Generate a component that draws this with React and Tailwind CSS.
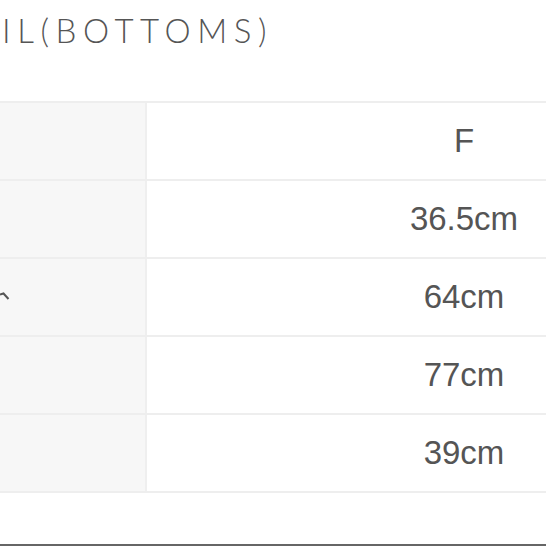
const rows = [
  { label: '', value: 'F' },
  { label: '', value: '36.5cm' },
  { label: 'mark', value: '64cm' },
  { label: '', value: '77cm' },
  { label: '', value: '39cm' },
];

export default function App() {
  return (
    <div className="w-[546px] h-[546px] overflow-hidden bg-white relative">
      <div className="h-[60px] pt-[8px] pl-[2px]">
        <h1 className="text-[33px] leading-[44px] font-light tracking-[0.2em] text-[#555]" style={{ fontFamily: 'Lato, "Open Sans", sans-serif' }}>
          IL(BOTTOMS)
        </h1>
      </div>
      <div className="mt-[41px] w-[800px] border-t-2 border-[#eeeeee]">
        {rows.map((row, i) => (
          <div key={i} className="flex h-[78px] border-b-2 border-[#eeeeee]">
            <div className="w-[147px] shrink-0 bg-[#f7f7f7] border-r-2 border-[#efefef] relative">
              {row.label === 'mark' && (
                <svg className="absolute left-0 top-[33px]" width="10" height="9" viewBox="0 0 10 9">
                  <path d="M0 2.5 L3.5 1.5 L8.5 7" stroke="#555" strokeWidth="2" fill="none" />
                </svg>
              )}
            </div>
            <div className="w-[634px] flex items-center justify-center text-[33px] text-[#555]" style={{ fontFamily: '"Liberation Sans", Arial, sans-serif' }}>
              {row.value}
            </div>
          </div>
        ))}
      </div>
      <div className="absolute left-0 right-0 bottom-0 h-[2px] bg-[#666]" />
    </div>
  );
}
